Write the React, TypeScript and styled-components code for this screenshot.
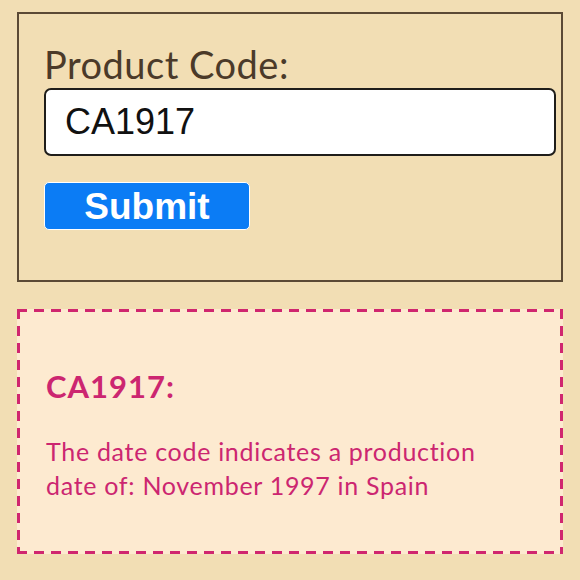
import React, { useState } from 'react';
import styled, { createGlobalStyle } from 'styled-components';

const GlobalStyle = createGlobalStyle`
    html, body {
        margin: 0;
        padding: 0;
        background: #f2deb4;
    }
    * {
        box-sizing: border-box;
    }
`;

const Page = styled.div`
    width: 580px;
    height: 580px;
    padding: 12px 17px 0 17px;
    display: flex;
    flex-direction: column;
    gap: 27px;
    font-family: Lato, "Open Sans", sans-serif;
`;

const Form = styled.form`
    height: 270px;
    border: 2px solid #5b4935;
    padding: 31px 5px 0 25px;
    display: flex;
    flex-direction: column;
`;

const Label = styled.label`
    color: #4b3a29;
    font-size: 38px;
    line-height: 38px;
    letter-spacing: 0.5px;
    margin-bottom: 5px;
`;

const CodeInput = styled.input`
    width: 100%;
    height: 68px;
    border: 2px solid #1f1d1a;
    border-radius: 7px;
    background: #fff;
    padding: 0 0 0 19px;
    font-family: "Liberation Sans", Arial, sans-serif;
    font-size: 36px;
    color: #111;
    outline: none;
`;

const SubmitButton = styled.button`
    align-self: flex-start;
    margin-top: 26px;
    width: 206px;
    height: 48px;
    background: #0b7cf5;
    border: 1px solid #ffffff;
    border-radius: 5px;
    color: #fff;
    font-family: "Liberation Sans", Arial, sans-serif;
    font-weight: bold;
    font-size: 37px;
    line-height: 1;
    padding: 0;
    cursor: pointer;
`;

const dash = '#d0266f';

const Result = styled.div`
    height: 245px;
    background-color: #fdead0;
    background-image:
        repeating-linear-gradient(90deg, ${dash} 0 10px, transparent 10px 17px),
        repeating-linear-gradient(90deg, ${dash} 0 10px, transparent 10px 17px),
        repeating-linear-gradient(180deg, ${dash} 0 10px, transparent 10px 17px),
        repeating-linear-gradient(180deg, ${dash} 0 10px, transparent 10px 17px);
    background-size: 100% 3px, 100% 3px, 3px 100%, 3px 100%;
    background-position: left top, left bottom, left top, right top;
    background-repeat: no-repeat;
    padding: 59px 26px 0 29px;
    color: #cc2670;
`;

const ResultTitle = styled.div`
    font-weight: bold;
    font-size: 31px;
    line-height: 36px;
    letter-spacing: 1px;
    margin-bottom: 30px;
`;

const ResultText = styled.div`
    font-size: 25px;
    line-height: 34px;
    letter-spacing: 0.7px;
    max-width: 455px;
`;

export default function App() {
    const [code, setCode] = useState('CA1917');

    return <>
        <GlobalStyle />
        <Page>
            <Form onSubmit={e => e.preventDefault()}>
                <Label htmlFor="code">Product Code:</Label>
                <CodeInput id="code" value={code} onChange={e => setCode(e.target.value)} />
                <SubmitButton type="submit">Submit</SubmitButton>
            </Form>
            <Result>
                <ResultTitle>CA1917:</ResultTitle>
                <ResultText>The date code indicates a production date of: November 1997 in Spain</ResultText>
            </Result>
        </Page>
    </>;
}
